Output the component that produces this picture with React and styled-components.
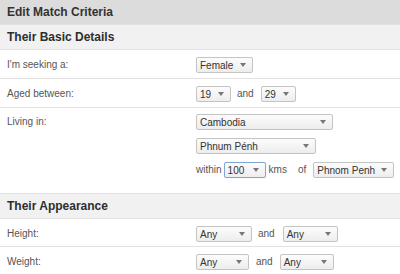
import React from 'react';
import styled, { createGlobalStyle } from 'styled-components';

const Global = createGlobalStyle`
  html, body {
    margin: 0;
    padding: 0;
    background: #fff;
  }
  body {
    font-family: 'Liberation Sans', Arial, sans-serif;
    width: 400px;
    overflow: hidden;
  }
`;

const Panel = styled.div`
  width: 400px;
  height: 274px;
  overflow: hidden;
  background: #fff;
`;

const TopBar = styled.div`
  height: 24px;
  background: #dcdcdc;
  display: flex;
  align-items: center;
  padding-left: 7px;
  font-size: 12px;
  font-weight: bold;
  color: #333;
`;

const SectionHead = styled.div`
  height: 24px;
  margin-top: ${(p) => p.gap || 0}px;
  background: #f1f1f1;
  border-top: 1px solid #e2e2e2;
  border-bottom: 1px solid #e2e2e2;
  display: flex;
  align-items: center;
  padding-left: 7px;
  font-size: 12px;
  font-weight: bold;
  color: #2e2e2e;
`;

const Row = styled.div`
  display: grid;
  grid-template-columns: 196px 1fr;
  padding: ${(p) => p.pad || '7px 0 5px'};
  border-bottom: ${(p) => (p.last ? 'none' : '1px solid #e2e2e2')};
`;

const Label = styled.div`
  padding-left: 7px;
  font-size: 10px;
  color: #555;
  line-height: 16px;
`;

const Controls = styled.div`
  display: flex;
  flex-direction: column;
  gap: 8px;
`;

const Line = styled.div`
  display: flex;
  align-items: center;
  font-size: 10px;
  color: #555;
`;

const Word = styled.span`
  flex-shrink: 0;
  margin: 0 ${(p) => p.r ?? 7}px 0 ${(p) => p.l ?? 6}px;
  line-height: 16px;
`;

const Box = styled.div`
  flex-shrink: 0;
  box-sizing: border-box;
  width: ${(p) => p.w}px;
  height: 16px;
  display: flex;
  align-items: center;
  justify-content: space-between;
  padding: 0 6px 0 3px;
  border: 1px solid ${(p) => (p.focus ? '#7ea9d6' : '#c4c4c4')};
  border-radius: 2px;
  background: linear-gradient(#fcfcfc, #ededed);
  box-shadow: ${(p) => (p.focus ? '0 0 1px #b3cdea' : 'none')};
  font-size: 10px;
  color: #333;
`;

const Arrow = styled.span`
  width: 0;
  height: 0;
  border-left: 3.5px solid transparent;
  border-right: 3.5px solid transparent;
  border-top: 4px solid #777;
`;

const Select = ({ w, value, focus }) => (
  <Box w={w} focus={focus}>
    <span>{value}</span>
    <Arrow />
  </Box>
);

export default function App() {
  return (
    <Panel>
      <Global />
      <TopBar>Edit Match Criteria</TopBar>
      <SectionHead>Their Basic Details</SectionHead>
      <Row>
        <Label>I'm seeking a:</Label>
        <Line>
          <Select w={57} value="Female" />
        </Line>
      </Row>
      <Row>
        <Label>Aged between:</Label>
        <Line>
          <Select w={35} value="19" />
          <Word>and</Word>
          <Select w={35} value="29" />
        </Line>
      </Row>
      <Row pad="6px 0 8px" last>
        <Label>Living in:</Label>
        <Controls>
          <Line>
            <Select w={137} value="Cambodia" />
          </Line>
          <Line>
            <Select w={120} value="Phnum Pénh" />
          </Line>
          <Line>
            <Word l={0} r={2}>within</Word>
            <Select w={42} value="100" focus />
            <Word l={3} r={11}>kms</Word>
            <Word l={0} r={7}>of</Word>
            <Select w={81} value="Phnom Penh" />
          </Line>
        </Controls>
      </Row>
      <SectionHead gap={7}>Their Appearance</SectionHead>
      <Row pad="7px 0 4px">
        <Label>Height:</Label>
        <Line>
          <Select w={56} value="Any" />
          <Word l={6} r={8}>and</Word>
          <Select w={55} value="Any" />
        </Line>
      </Row>
      <Row last>
        <Label>Weight:</Label>
        <Line>
          <Select w={53} value="Any" />
          <Word l={7} r={7}>and</Word>
          <Select w={54} value="Any" />
        </Line>
      </Row>
    </Panel>
  );
}
